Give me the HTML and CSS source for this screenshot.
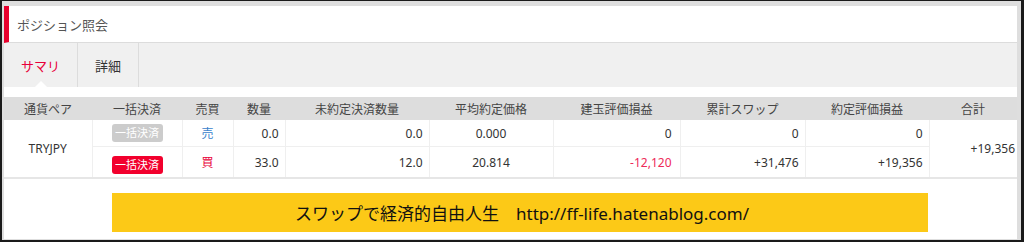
FILE: index.html
```html
<!DOCTYPE html>
<html lang="ja">
<head>
<meta charset="utf-8">
<link rel="stylesheet" href="styles.css">
</head>
<body>
<div class="frame">
  <div class="page">
    <div class="title-bar">ポジション照会</div>
    <div class="tabs">
      <div class="tab active">サマリ</div>
      <div class="tab tab2">詳細</div>
    </div>
    <div class="panel">
      <table class="pos">
        <colgroup>
          <col style="width:88px"><col style="width:90px"><col style="width:51px"><col style="width:52px"><col style="width:144px"><col style="width:124px"><col style="width:127px"><col style="width:125px"><col style="width:124px"><col style="width:88px">
        </colgroup>
        <thead>
          <tr>
            <th>通貨ペア</th><th>一括決済</th><th>売買</th><th>数量</th><th>未約定決済数量</th><th>平均約定価格</th><th>建玉評価損益</th><th>累計スワップ</th><th>約定評価損益</th><th>合計</th>
          </tr>
        </thead>
        <tbody>
          <tr class="r1">
            <td rowspan="2" class="c">TRYJPY</td>
            <td class="c"><span class="btn off">一括決済</span></td>
            <td class="c sell">売</td>
            <td class="n">0.0</td>
            <td class="n">0.0</td>
            <td class="c">0.000</td>
            <td class="n wide">0</td>
            <td class="n">0</td>
            <td class="n">0</td>
            <td rowspan="2" class="n total">+19,356</td>
          </tr>
          <tr class="r2">
            <td class="c"><span class="btn on">一括決済</span></td>
            <td class="c buy">買</td>
            <td class="n">33.0</td>
            <td class="n">12.0</td>
            <td class="c">20.814</td>
            <td class="n wide neg">-12,120</td>
            <td class="n">+31,476</td>
            <td class="n">+19,356</td>
          </tr>
        </tbody>
      </table>
      <div class="banner">スワップで経済的自由人生　http://ff-life.hatenablog.com/</div>
    </div>
  </div>
</div>
</body>
</html>
```

FILE: styles.css
```css
html, body {
  margin: 0;
  padding: 0;
}
body {
  background: #1a1a1a;
  width: 1024px;
  height: 242px;
  overflow: hidden;
  font-family: "Noto Sans", "Noto Sans CJK JP", sans-serif;
  color: #333;
}
.frame {
  margin: 1px 3px 0 2px;
  height: 239px;
  box-sizing: border-box;
  background: #dedede;
  padding: 5px 4px 1px 2px;
}
.page {
  background: #fff;
  height: 100%;
  overflow: hidden;
}
.title-bar {
  box-sizing: border-box;
  border-left: 5px solid #e8002d;
  border-bottom: 1px solid #dcdcdc;
  height: 37px;
  padding-left: 8px;
  display: flex;
  align-items: center;
  font-size: 13px;
  color: #555;
}
.tabs {
  display: flex;
  height: 44px;
  background: #f0f0f0;
}
.tab {
  position: relative;
  width: 73px;
  border-right: 1px solid #dcdcdc;
  display: flex;
  align-items: center;
  justify-content: center;
  font-size: 13px;
  color: #333;
}
.tab2 {
  width: 60px;
}
.tab.active {
  color: #e8003a;
}
.tab.active::after {
  content: "";
  position: absolute;
  left: 50%;
  bottom: 0;
  margin-left: -6px;
  border-left: 6px solid transparent;
  border-right: 6px solid transparent;
  border-bottom: 6px solid #fff;
}
.panel {
  padding-top: 10px;
}
.pos {
  width: 1013px;
  table-layout: fixed;
  border-collapse: collapse;
  font-size: 12px;
}
.pos th {
  background: #dddddd;
  height: 23px;
  padding: 0;
  font-weight: normal;
  color: #444;
  text-align: center;
}
.pos td {
  padding: 0 6px 0 0;
  border-right: 1px solid #efefef;
  border-bottom: 1px solid #efefef;
  color: #333;
  white-space: nowrap;
}
.pos td.c {
  text-align: center;
  padding: 0;
}
.pos td.n {
  text-align: right;
}
.pos td.wide {
  padding-right: 8px;
}
.pos td.total {
  padding-right: 2px;
  border-right: none;
}
.pos tr.r1 td {
  height: 26px;
}
.pos tr.r2 td {
  height: 30px;
}
.pos tbody tr.r2 td,
.pos tbody td[rowspan] {
  border-bottom: 2px solid #e6e6e6;
}
.pos td.sell {
  color: #3a82cc;
}
.pos td.buy {
  color: #e8003a;
}
.pos td.neg {
  color: #ee2a5a;
}
.btn {
  display: inline-block;
  width: 51px;
  height: 18px;
  line-height: 18px;
  border-radius: 3px;
  color: #fff;
  font-size: 11px;
  text-align: center;
}
.btn.off {
  background: #cccccc;
}
.btn.on {
  background: #f2002d;
  margin-top: 6px;
}
.banner {
  margin: 14px 0 0 108px;
  width: 816px;
  height: 39px;
  background: #fcc917;
  color: #111;
  font-size: 17px;
  display: flex;
  align-items: center;
  justify-content: center;
  padding-left: 4px;
  box-sizing: border-box;
}
```
